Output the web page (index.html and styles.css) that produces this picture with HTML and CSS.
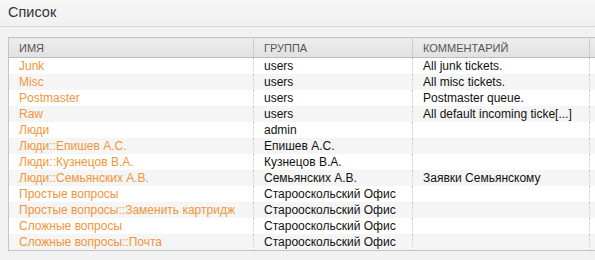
FILE: index.html
```html
<!DOCTYPE html>
<html>
<head>
<meta charset="utf-8">
<link rel="stylesheet" href="styles.css">
</head>
<body>
<div class="page">
  <div class="titlebar"><h1 class="title">Список</h1></div>
  <div class="content">
    <table class="grid">
      <colgroup>
        <col class="c1"><col class="c2"><col class="c3"><col class="c4">
      </colgroup>
      <thead>
        <tr><th>Имя</th><th>Группа</th><th>Комментарий</th><th></th></tr>
      </thead>
      <tbody>
        <tr><td class="name">Junk</td><td>users</td><td>All junk tickets.</td><td></td></tr>
        <tr><td class="name">Misc</td><td>users</td><td>All misc tickets.</td><td></td></tr>
        <tr><td class="name">Postmaster</td><td>users</td><td>Postmaster queue.</td><td></td></tr>
        <tr><td class="name">Raw</td><td>users</td><td>All default incoming ticke[...]</td><td></td></tr>
        <tr><td class="name">Люди</td><td>admin</td><td></td><td></td></tr>
        <tr><td class="name">Люди::Епишев А.С.</td><td>Епишев А.С.</td><td></td><td></td></tr>
        <tr><td class="name">Люди::Кузнецов В.А.</td><td>Кузнецов В.А.</td><td></td><td></td></tr>
        <tr><td class="name">Люди::Семьянских А.В.</td><td>Семьянских А.В.</td><td>Заявки Семьянскому</td><td></td></tr>
        <tr><td class="name">Простые вопросы</td><td>Старооскольский Офис</td><td></td><td></td></tr>
        <tr><td class="name">Простые вопросы::Заменить картридж</td><td>Старооскольский Офис</td><td></td><td></td></tr>
        <tr><td class="name">Сложные вопросы</td><td>Старооскольский Офис</td><td></td><td></td></tr>
        <tr><td class="name">Сложные вопросы::Почта</td><td>Старооскольский Офис</td><td></td><td></td></tr>
      </tbody>
    </table>
  </div>
</div>
</body>
</html>
```

FILE: styles.css
```css
html, body {
  margin: 0;
  padding: 0;
  background: #f2f2f2;
  overflow: hidden;
}
.page {
  width: 595px;
  height: 260px;
  overflow: hidden;
  font-family: "Liberation Sans", Arial, sans-serif;
  color: #111;
}
.titlebar {
  height: 27px;
  box-sizing: border-box;
  border-bottom: 1px solid #d4d4d4;
  background: linear-gradient(#f6f6f6, #f1f1f1);
  padding: 0 8px;
  display: flex;
  align-items: center;
}
.title {
  margin: 0;
  font-size: 14.5px;
  font-weight: normal;
  color: #333;
  line-height: 16px;
  padding-bottom: 2px;
}
.content {
  padding: 10px 0 0 8px;
}
.grid {
  border-collapse: collapse;
  table-layout: fixed;
  width: 640px;
  border: 1px solid #c4c4c4;
  font-size: 12px;
  background: #fff;
}
.c1 { width: 245px; }
.c2 { width: 159px; }
.c3 { width: 177px; }
.c4 { width: 59px; }
.grid th {
  height: 19px;
  padding: 0 10px;
  text-align: left;
  font-weight: normal;
  font-size: 11px;
  text-transform: uppercase;
  color: #555;
  background: linear-gradient(#ededed, #e1e1e1);
  border-bottom: 1px solid #bdbdbd;
  border-left: 1px solid #cdcdcd;
}
.grid th:first-child { border-left: 0; }
.grid td {
  height: 16px;
  line-height: 16px;
  padding: 0 10px;
  white-space: nowrap;
  overflow: hidden;
  border-left: 1px dotted #c8c8c8;
}
.grid td:first-child { border-left: 0; }
.grid tbody tr:nth-child(even) td { background: #f5f5f5; }
.grid td.name { color: #f2953a; }
```
